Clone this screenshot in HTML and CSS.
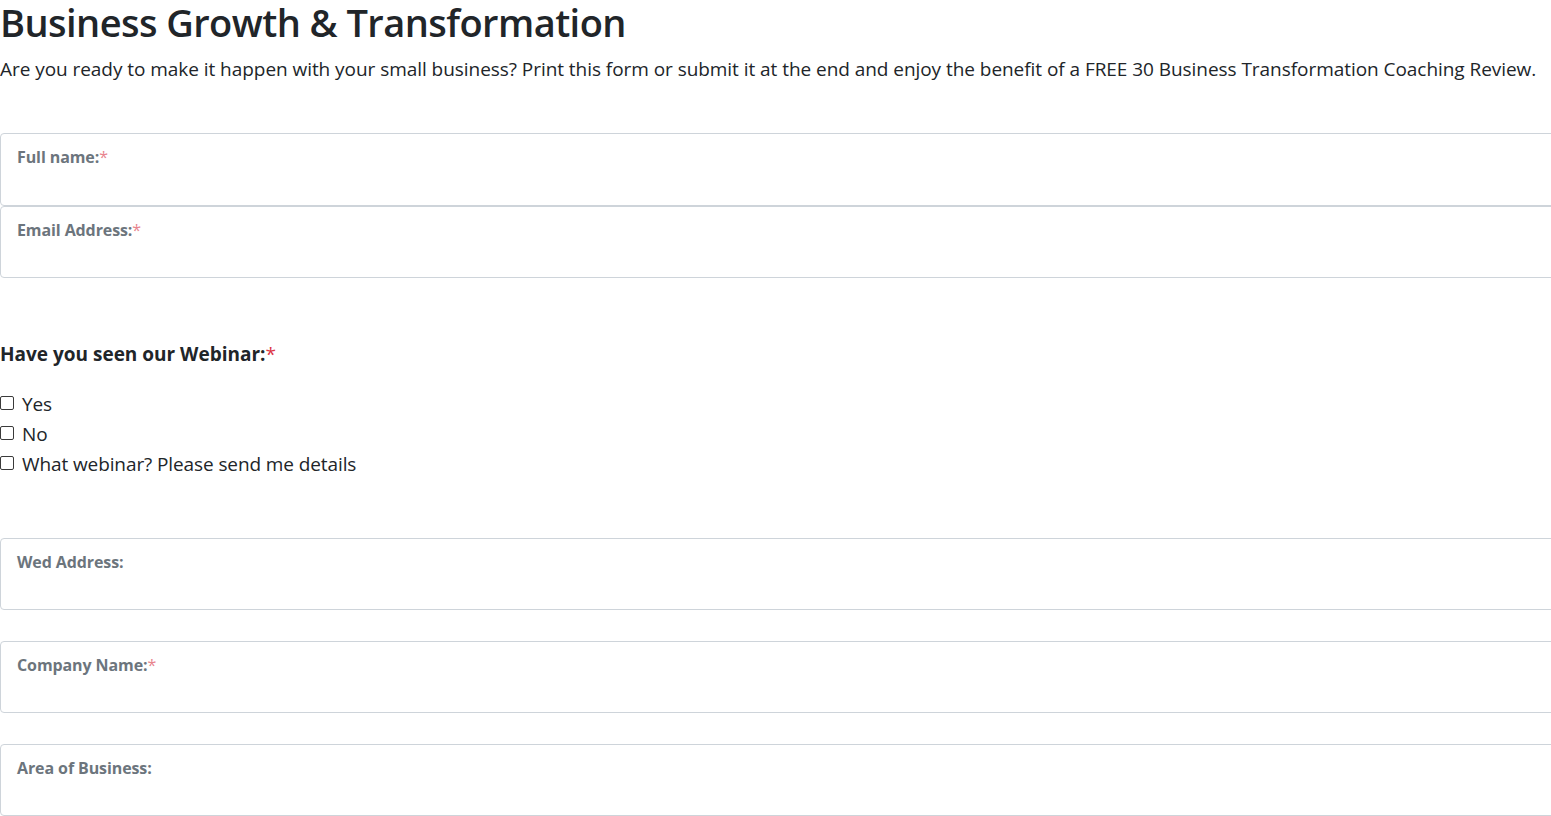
FILE: index.html
```html
<!DOCTYPE html>
<html lang="en">
<head>
<meta charset="utf-8">
<title>Business Growth &amp; Transformation</title>
<link rel="stylesheet" href="styles.css">
</head>
<body>
<main class="page">
  <h1 class="title">Business Growth &amp; Transformation</h1>
  <p class="lead">Are you ready to make it happen with your small business? Print this form or submit it at the end and enjoy the benefit of a FREE 30 Business Transformation Coaching Review.</p>

  <div class="group">
    <div class="field field-top"><label class="field-label">Full name:<span class="req">*</span></label></div>
    <div class="field"><label class="field-label">Email Address:<span class="req">*</span></label></div>
  </div>

  <section class="question">
    <h2 class="q-title">Have you seen our Webinar:<span class="req-strong">*</span></h2>
    <label class="option"><span class="check"></span>Yes</label>
    <label class="option"><span class="check"></span>No</label>
    <label class="option"><span class="check"></span>What webinar? Please send me details</label>
  </section>

  <div class="field field-solo field-first"><label class="field-label">Wed Address:</label></div>
  <div class="field field-solo"><label class="field-label">Company Name:<span class="req">*</span></label></div>
  <div class="field field-solo"><label class="field-label">Area of Business:</label></div>
</main>
</body>
</html>
```
FILE: styles.css
```css
html, body {
  margin: 0;
  padding: 0;
  background: #ffffff;
  overflow: hidden;
}
body {
  font-family: "Open Sans", "Noto Sans", sans-serif;
  color: #212529;
}
.page {
  width: 100%;
}
.title {
  margin: 0;
  font-size: 38px;
  font-weight: 600;
  line-height: 44px;
  color: #212529;
  letter-spacing: -0.55px;
  white-space: nowrap;
}
.lead {
  margin: 10px 0 0 0;
  font-size: 19px;
  font-weight: 400;
  line-height: 30px;
  color: #212529;
  letter-spacing: -0.05px;
  white-space: nowrap;
}
.group {
  margin-top: 49px;
}
.field {
  box-sizing: border-box;
  height: 72px;
  margin-right: -12px;
  border: 1px solid #ced4da;
  border-radius: 4px;
  padding: 12px 16px 0 16px;
}
.field-top {
  height: 73px;
}
.field-label {
  font-family: "Open Sans", sans-serif;
  font-size: 16px;
  font-weight: 700;
  color: #6c757d;
  letter-spacing: -0.1px;
}
.req {
  color: #e8848d;
  font-weight: 400;
}
.req-strong {
  color: #dc3545;
  font-weight: 400;
}
.question {
  margin-top: 61px;
}
.q-title {
  margin: 0 0 20px 0;
  font-size: 19px;
  font-weight: 700;
  line-height: 30px;
  color: #212529;
}
.option {
  display: flex;
  align-items: center;
  height: 30px;
  font-size: 19px;
  color: #212529;
  letter-spacing: -0.1px;
}
.check {
  box-sizing: border-box;
  width: 14px;
  height: 14px;
  border: 1px solid #3a3a3a;
  border-radius: 2px;
  margin: 0 8px 3px 0;
  flex: none;
}
.field-solo {
  margin-top: 31px;
}
.field-solo.field-first {
  margin-top: 59px;
}
```
